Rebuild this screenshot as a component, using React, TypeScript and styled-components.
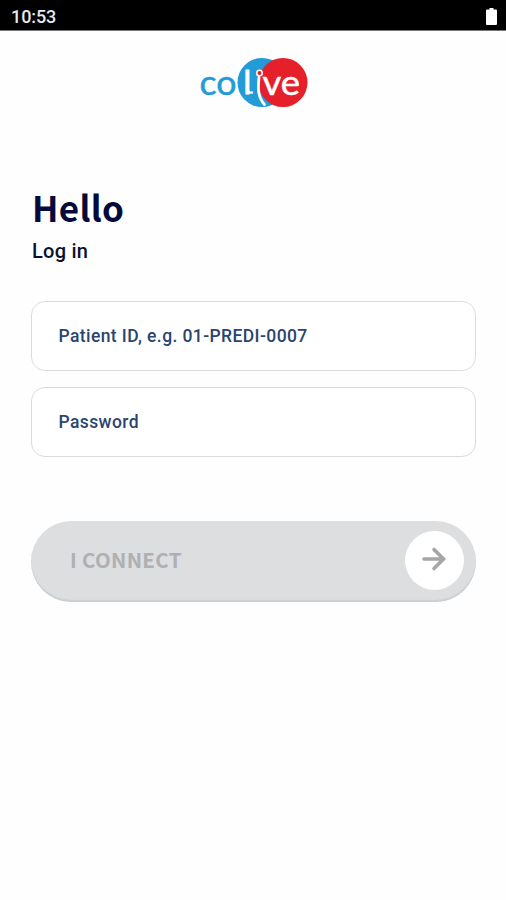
import React from "react";
import styled, { createGlobalStyle } from "styled-components";

const GlobalStyle = createGlobalStyle`
  * { box-sizing: border-box; }
  body { margin: 0; background: #fefefe; }
`;

const Screen = styled.div`
  display: flex;
  flex-direction: column;
  width: 506px;
  height: 900px;
  background: #fefefe;
  font-family: Roboto, "Liberation Sans", sans-serif;
`;

const StatusBar = styled.header`
  display: flex;
  align-items: center;
  justify-content: space-between;
  height: 31px;
  padding: 3px 8px 0 11px;
  background: #000;
  border-bottom: 1px solid #777;
  color: #e8e8e8;
`;

const Clock = styled.span`
  font-size: 18px;
  line-height: 20px;
  font-weight: 500;
  letter-spacing: -0.1px;
`;

const BatteryIcon = styled.svg`
  display: block;
  width: 13px;
  height: 18px;
`;

const Content = styled.main`
  display: flex;
  flex-direction: column;
  padding: 24px 30px 0 31px;
`;

const Logo = styled.svg`
  display: block;
  align-self: center;
  width: 112px;
  height: 56px;
`;

const Title = styled.h1`
  margin: 71px 0 0 1px;
  font-family: "Noto Sans CJK JP", "Noto Sans", sans-serif;
  font-size: 35px;
  line-height: 50px;
  font-weight: 700;
  letter-spacing: 0.3px;
  color: #050a3c;
`;

const Subtitle = styled.h2`
  margin: 7px 0 0 1px;
  font-size: 20px;
  line-height: 24px;
  font-weight: 500;
  letter-spacing: 0.25px;
  color: #0b1030;
`;

const Form = styled.form`
  display: flex;
  flex-direction: column;
  gap: 16px;
  margin-top: 38px;
`;

const Field = styled.label`
  display: flex;
  align-items: center;
  height: 70px;
  padding-left: 26.5px;
  border: 1.5px solid #dcdcde;
  border-radius: 14px;
  background: #fff;
`;

const Placeholder = styled.span`
  font-size: 17.5px;
  line-height: 20px;
  font-weight: 500;
  letter-spacing: 0.4px;
  color: #2b4470;
`;

const ConnectButton = styled.button`
  display: flex;
  align-items: center;
  justify-content: space-between;
  height: 81px;
  margin-top: 48px;
  padding: 0 12px 2px 39px;
  border: 0;
  border-radius: 41px;
  background: #dcdee0;
  box-shadow: inset 0 -2px 1px #cccfd1;
`;

const ButtonLabel = styled.span`
  margin-bottom: 3px;
  font-family: "Noto Sans CJK JP", "Noto Sans", sans-serif;
  font-size: 20.5px;
  line-height: 28px;
  font-weight: 700;
  letter-spacing: 0.3px;
  color: #aeb0b2;
`;

const ArrowDisc = styled.span`
  display: grid;
  place-items: center;
  width: 59px;
  height: 59px;
  border-radius: 50%;
  background: #fff;
`;

const ArrowIcon = styled.svg`
  display: block;
  width: 26px;
  height: 26px;
  margin: 0 1px 3px 0;
`;

export default function App() {
  return (
    <>
      <GlobalStyle />
      <Screen>
        <StatusBar>
          <Clock>10:53</Clock>
          <BatteryIcon viewBox="0 0 13 18" aria-hidden="true">
            <path d="M4.500 0h4v1.500H11q1 0 1 1V16q0 1-1 1H2q-1 0-1-1V2.500q0-1 1-1h2.500z" fill="#fff" />
          </BatteryIcon>
        </StatusBar>
        <Content>
          <Logo viewBox="198 55 112 56" role="img" aria-label="colive">
            <circle cx="262" cy="82.500" r="24.500" fill="#239bd7" />
            <circle cx="283" cy="82.500" r="24.500" fill="#e6202b" />
            <g fontFamily="Lato, sans-serif" fontSize="34" fontWeight="400" strokeWidth="0.5">
              <text x="199.500" y="94.500" textLength="37" lengthAdjust="spacingAndGlyphs" fill="#239bd7" stroke="#239bd7">co</text>
              <text x="243.500" y="94" fontSize="32" fill="#fff" stroke="#fff" strokeWidth="1">l</text>
              <text x="262.500" y="94.500" textLength="37.500" lengthAdjust="spacingAndGlyphs" fill="#fff" stroke="#fff">ve</text>
            </g>
            <path d="M247.900 90Q248.200 93.200 252 92.500" fill="none" stroke="#fff" strokeWidth="2.400" strokeLinecap="round" />
            <path d="M259 77C258 88 257.500 97 264.500 104.500" fill="none" stroke="#fff" strokeWidth="2.800" strokeLinecap="round" />
            <circle cx="259.500" cy="73" r="2.800" fill="#e6202b" stroke="#fff" strokeWidth="1.500" />
          </Logo>
          <Title>Hello</Title>
          <Subtitle>Log in</Subtitle>
          <Form>
            <Field><Placeholder>Patient ID, e.g. 01-PREDI-0007</Placeholder></Field>
            <Field><Placeholder>Password</Placeholder></Field>
            <ConnectButton type="button">
              <ButtonLabel>I CONNECT</ButtonLabel>
              <ArrowDisc>
                <ArrowIcon viewBox="0 0 26 26" aria-hidden="true">
                  <path d="M3 13H22M13 3.500L22.500 13L13 22.500" fill="none" stroke="#a6a6a6" strokeWidth="3.600" strokeLinecap="round" />
                </ArrowIcon>
              </ArrowDisc>
            </ConnectButton>
          </Form>
        </Content>
      </Screen>
    </>
  );
}
